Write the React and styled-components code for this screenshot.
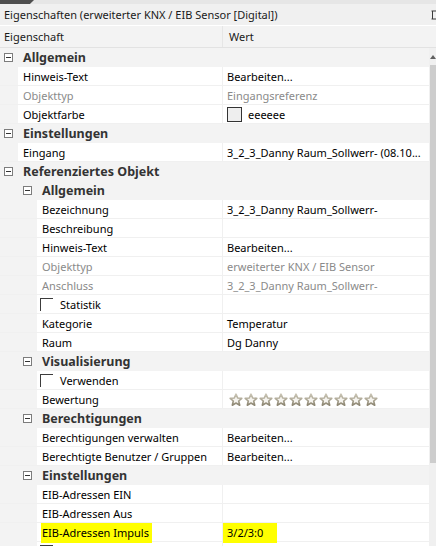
import React from 'react';
import styled, { createGlobalStyle } from 'styled-components';

const GlobalStyle = createGlobalStyle`
  html, body {
    margin: 0;
    padding: 0;
    overflow: hidden;
    background: #f0f0f0;
  }
  body {
    font-family: "Noto Sans", "Open Sans", sans-serif;
    font-size: 11px;
    color: #000;
  }
`;

const rows = [
  { cat: true, depth: 0, label: 'Allgemein' },
  { depth: 0, label: 'Hinweis-Text', value: 'Bearbeiten...' },
  { depth: 0, label: 'Objekttyp', value: 'Eingangsreferenz', disabled: true },
  { depth: 0, label: 'Objektfarbe', value: 'eeeeee', swatch: '#eeeeee' },
  { cat: true, depth: 0, label: 'Einstellungen' },
  { depth: 0, label: 'Eingang', value: '3_2_3_Danny Raum_Sollwerr- (08.10...' },
  { cat: true, depth: 0, label: 'Referenziertes Objekt' },
  { cat: true, depth: 1, label: 'Allgemein' },
  { depth: 1, label: 'Bezeichnung', value: '3_2_3_Danny Raum_Sollwerr-' },
  { depth: 1, label: 'Beschreibung', value: '' },
  { depth: 1, label: 'Hinweis-Text', value: 'Bearbeiten...' },
  { depth: 1, label: 'Objekttyp', value: 'erweiterter KNX / EIB Sensor', disabled: true },
  { depth: 1, label: 'Anschluss', value: '3_2_3_Danny Raum_Sollwerr-', disabled: true },
  { depth: 1, label: 'Statistik', check: true },
  { depth: 1, label: 'Kategorie', value: 'Temperatur' },
  { depth: 1, label: 'Raum', value: 'Dg Danny' },
  { cat: true, depth: 1, label: 'Visualisierung' },
  { depth: 1, label: 'Verwenden', check: true },
  { depth: 1, label: 'Bewertung', stars: 10 },
  { cat: true, depth: 1, label: 'Berechtigungen' },
  { depth: 1, label: 'Berechtigungen verwalten', value: 'Bearbeiten...' },
  { depth: 1, label: 'Berechtigte Benutzer / Gruppen', value: 'Bearbeiten...' },
  { cat: true, depth: 1, label: 'Einstellungen' },
  { depth: 1, label: 'EIB-Adressen EIN', value: '' },
  { depth: 1, label: 'EIB-Adressen Aus', value: '' },
  { depth: 1, label: 'EIB-Adressen Impuls', value: '3/2/3:0', mark: true },
  { depth: 1, label: '', check: true },
];

const Star = () => (
  <svg width="14" height="14" viewBox="0 0 14 14">
    <defs>
      <linearGradient id="sg" x1="0" y1="0" x2="0" y2="1">
        <stop offset="0" stopColor="#c9c4b4" />
        <stop offset="1" stopColor="#8d8672" />
      </linearGradient>
    </defs>
    <path
      d="M7 1.2 L8.7 5 L12.8 5.3 L9.7 8 L10.7 12.2 L7 10 L3.3 12.2 L4.3 8 L1.2 5.3 L5.3 5 Z"
      fill="#f5f3ee"
      stroke="url(#sg)"
      strokeWidth="1.6"
      strokeLinejoin="round"
    />
  </svg>
);

// the pin button at the right edge is cut off by the window
const PinIcon = () => (
  <svg width="5" height="10" viewBox="0 0 5 10">
    <path d="M0.5 1 H5 M1.5 1 V9 M0.5 9 H5" stroke="#3a3a3a" strokeWidth="1" fill="none" />
  </svg>
);

export default function App() {
  return (
    <Window>
      <GlobalStyle />
      <TopStrip>
        <TabEdge />
      </TopStrip>
      <TitleBar>
        <span>Eigenschaften (erweiterter KNX / EIB Sensor [Digital])</span>
        <PinIcon />
      </TitleBar>
      <Header>
        <HeadCell>Eigenschaft</HeadCell>
        <HeadCell $value>Wert</HeadCell>
      </Header>
      <Body>
        <Grid>
          {rows.map((r, i) =>
            r.cat ? (
              <CatRow key={i}>
                <Gutter $depth={r.depth}>
                  <Toggle />
                </Gutter>
                <CatLabel>{r.label}</CatLabel>
              </CatRow>
            ) : (
              <Row key={i}>
                <NameCell>
                  <Gutter $depth={r.depth} />
                  <Label $disabled={r.disabled}>
                    {r.check && <Check />}
                    {r.mark ? <Mark>{r.label}</Mark> : r.label}
                  </Label>
                </NameCell>
                <ValueCell $disabled={r.disabled}>
                  {r.swatch && <Swatch style={{ background: r.swatch }} />}
                  {r.stars ? (
                    <Stars>
                      {Array.from({ length: r.stars }).map((_, j) => (
                        <Star key={j} />
                      ))}
                    </Stars>
                  ) : r.mark ? (
                    <ValueMark>{r.value}</ValueMark>
                  ) : (
                    r.value
                  )}
                </ValueCell>
              </Row>
            )
          )}
        </Grid>
        <ScrollBar>
          <ScrollArrow />
          <Thumb />
        </ScrollBar>
      </Body>
    </Window>
  );
}

const Window = styled.div`
  width: 436px;
  height: 546px;
  overflow: hidden;
  display: flex;
  flex-direction: column;
  background: #f0f0f0;
`;

const TopStrip = styled.div`
  height: 4px;
  flex: 0 0 4px;
  background: #e6e6e6;
  display: flex;
`;

const TabEdge = styled.div`
  width: 34px;
  background: #4f4f4f;
  clip-path: polygon(0 0, 100% 0, 88% 100%, 0 100%);
`;

const TitleBar = styled.div`
  height: 21px;
  flex: 0 0 21px;
  display: flex;
  align-items: center;
  justify-content: space-between;
  padding: 0 0 0 4px;
  background: #f0f0f0;
  border-bottom: 1px solid #ffffff;
  color: #1a1a1a;
`;

const Header = styled.div`
  height: 21px;
  flex: 0 0 21px;
  display: grid;
  grid-template-columns: 222px 1fr;
  background: #f3f3f3;
  border-bottom: 1px solid #e2e2e2;
`;

const HeadCell = styled.div`
  display: flex;
  align-items: center;
  padding-left: ${(p) => (p.$value ? '6px' : '4px')};
  border-left: ${(p) => (p.$value ? '1px solid #e6e6e6' : 'none')};
  color: #1a1a1a;
`;

const Body = styled.div`
  flex: 1;
  display: flex;
  min-height: 0;
`;

const Grid = styled.div`
  width: 429px;
  flex: 0 0 429px;
  display: flex;
  flex-direction: column;
  background: #ffffff;
`;

const Row = styled.div`
  height: 19px;
  flex: 0 0 19px;
  box-sizing: border-box;
  display: grid;
  grid-template-columns: 222px 1fr;
  border-bottom: 1px solid #f0f0f0;
`;

const CatRow = styled.div`
  height: 19px;
  flex: 0 0 19px;
  box-sizing: border-box;
  display: flex;
  align-items: stretch;
  background: #f3f3f3;
  border-bottom: 1px solid #f3f3f3;
`;

const NameCell = styled.div`
  display: flex;
  align-items: stretch;
  min-width: 0;
`;

const Gutter = styled.div`
  flex: 0 0 ${(p) => 18 + p.$depth * 19}px;
  background: #f3f3f3;
  display: flex;
  align-items: center;
  justify-content: flex-end;
  padding-right: 5px;
  box-sizing: border-box;
`;

const Toggle = styled.div`
  width: 9px;
  height: 9px;
  box-sizing: border-box;
  border: 1px solid #7c7c7c;
  background: #fff;
  position: relative;
  &::after {
    content: '';
    position: absolute;
    left: 1px;
    right: 1px;
    top: 3px;
    height: 1px;
    background: #333;
  }
`;

const CatLabel = styled.div`
  display: flex;
  align-items: center;
  padding-left: 5px;
  font-size: 12.5px;
  font-weight: 700;
  color: #333;
`;

const Label = styled.div`
  flex: 1;
  display: flex;
  align-items: center;
  padding-left: 5px;
  white-space: nowrap;
  overflow: hidden;
  color: ${(p) => (p.$disabled ? '#8a8a8a' : '#000')};
`;

const Check = styled.span`
  width: 13px;
  height: 13px;
  flex: 0 0 13px;
  box-sizing: border-box;
  margin: 0 7px 0 -2px;
  border-top: 1px solid #3c3c3c;
  border-left: 1px solid #3c3c3c;
`;

const Mark = styled.span`
  background: #ffff00;
  margin-left: -1px;
  padding: 2px 3px 3px 1px;
`;

const ValueCell = styled.div`
  display: flex;
  align-items: center;
  padding-left: 4px;
  border-left: 1px solid #f0f0f0;
  white-space: nowrap;
  overflow: hidden;
  color: ${(p) => (p.$disabled ? '#8a8a8a' : '#000')};
`;

const ValueMark = styled.span`
  background: #ffff00;
  margin-left: -4px;
  padding: 2px 8px 3px 4px;
  width: 42px;
`;

const Swatch = styled.span`
  width: 15px;
  height: 15px;
  box-sizing: border-box;
  border: 1px solid #333;
  margin: 0 6px 0 0;
`;

const Stars = styled.div`
  display: flex;
  gap: 1px;
  padding-left: 2px;
  padding-top: 2px;
`;

const ScrollBar = styled.div`
  flex: 1;
  background: #f0f0f0;
  display: flex;
  flex-direction: column;
  align-items: flex-end;
`;

const ScrollArrow = styled.div`
  width: 0;
  height: 0;
  margin: 7px 0 6px 0;
  border-left: 3px solid transparent;
  border-right: 3px solid transparent;
  border-bottom: 4px solid #606060;
`;

const Thumb = styled.div`
  width: 6px;
  height: 398px;
  background: #cdcdcd;
`;
